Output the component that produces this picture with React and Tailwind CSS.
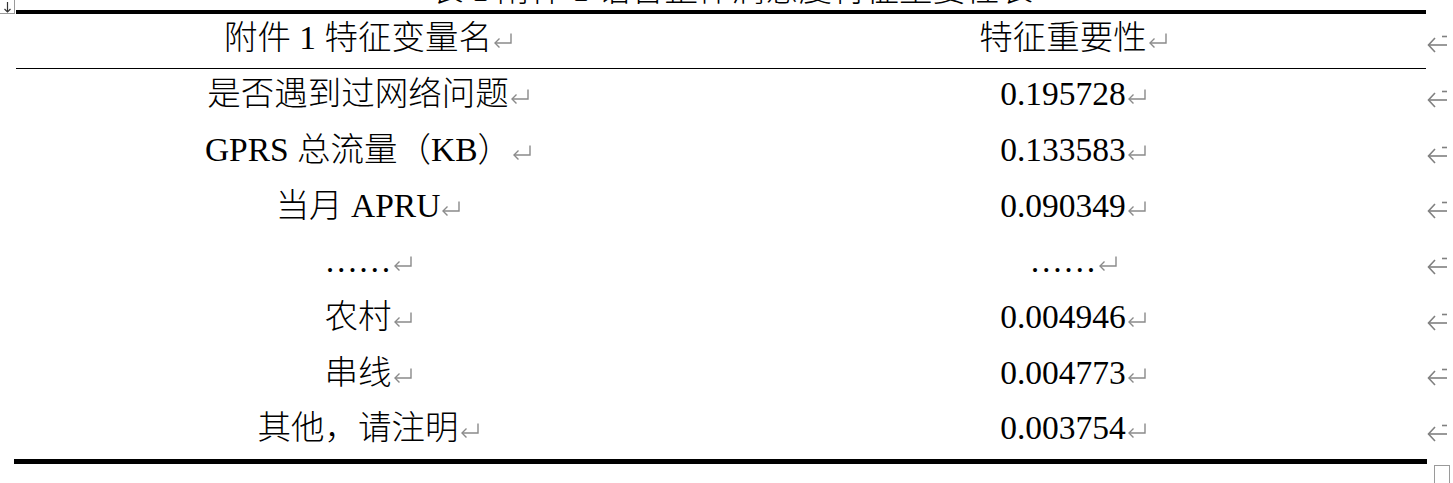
import React from "react";

const rows = [
  ["是否遇到过网络问题", "0.195728"],
  ["GPRS 总流量（KB）", "0.133583"],
  ["当月 APRU", "0.090349"],
  ["……", "……"],
  ["农村", "0.004946"],
  ["串线", "0.004773"],
  ["其他，请注明", "0.003754"],
];

function Mark() {
  return (
    <svg width="20" height="17" viewBox="0 0 20 17" fill="none" stroke="#8a8a8a" strokeWidth="1.4" className="inline-block ml-[1px] align-baseline">
      <path d="M18 1.5 V11 H2" />
      <path d="M6.5 6.5 L2 11 L6.5 15.5" />
    </svg>
  );
}

function RowEnd() {
  return (
    <svg width="26" height="20" viewBox="0 0 26 20" fill="none" stroke="#808080" strokeWidth="1.6" className="ml-[1px] mt-[6px] shrink-0">
      <path d="M1.5 10 H20" />
      <path d="M8 3 L1.5 10 L8 17" />
      <path d="M15 1.5 H20" />
    </svg>
  );
}

function Row({ left, right, header }) {
  return (
    <div className="flex items-center">
      <div className={"flex w-[1410px] shrink-0 " + (header ? "h-[55px] border-b border-black" : "h-[55.7px]")}>
        <div className="flex w-1/2 items-center justify-center pb-[5px]">
          <span>{left}<Mark /></span>
        </div>
        <div className="flex w-1/2 items-center justify-center pb-[5px]">
          <span>{right}<Mark /></span>
        </div>
      </div>
      <RowEnd />
    </div>
  );
}

export default function App() {
  return (
    <div
      className="relative h-[483px] w-[1453px] overflow-hidden bg-white text-[33.5px] font-light text-black"
      style={{ fontFamily: '"Liberation Serif", "Noto Sans CJK SC", serif' }}
    >
      <div className="-mt-[30px] h-[40px] text-center leading-[40px] pl-[10px]">
        表 1 附件 1 语音整体满意度特征重要性表
      </div>
      <div className="ml-[16px]">
        <div className="h-[4px] w-[1410px] bg-black" />
        <Row left="附件 1 特征变量名" right="特征重要性" header />
        {rows.map((r, i) => (
          <Row key={i} left={r[0]} right={r[1]} />
        ))}
        <div className="-ml-[2px] h-[5px] w-[1413px] bg-black" />
      </div>

      <div className="absolute left-0 top-0 flex h-[14px] w-[15px] items-end justify-center border-b border-r border-[#9a9a9a] bg-white">
        <svg width="9" height="11" viewBox="0 0 9 11" fill="none" stroke="#333" strokeWidth="1.2">
          <path d="M4.5 0 V10" />
          <path d="M1.5 7 L4.5 10 L7.5 7" />
        </svg>
      </div>
      <div className="absolute left-[1434px] top-[465px] h-[20px] w-[16px] border border-[#9a9a9a]" />
    </div>
  );
}
